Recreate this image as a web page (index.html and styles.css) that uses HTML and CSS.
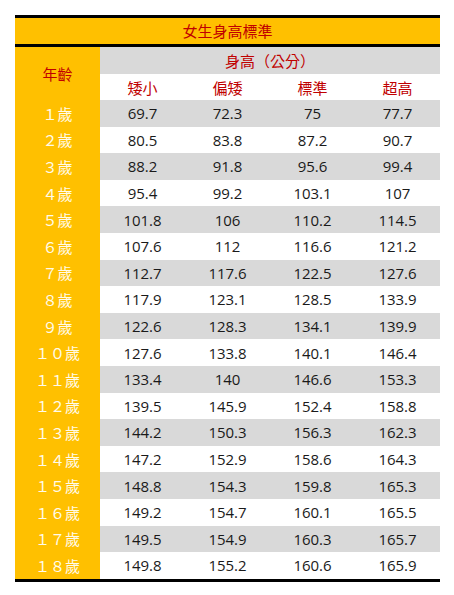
FILE: index.html
```html
<!DOCTYPE html>
<html lang="zh-Hant">
<head>
<meta charset="utf-8">
<title>女生身高標準</title>
<link rel="stylesheet" href="styles.css">
</head>
<body>
<div class="sheet">
  <div class="title">女生身高標準</div>
  <div class="grid">
    <div class="c age-head">年齡</div>
    <div class="c height-head">身高（公分）</div>
    <div class="c sub">矮小</div>
    <div class="c sub">偏矮</div>
    <div class="c sub">標準</div>
    <div class="c sub">超高</div>

    <div class="c lbl">１歲</div><div class="c g">69.7</div><div class="c g">72.3</div><div class="c g">75</div><div class="c g">77.7</div>
    <div class="c lbl">２歲</div><div class="c w">80.5</div><div class="c w">83.8</div><div class="c w">87.2</div><div class="c w">90.7</div>
    <div class="c lbl">３歲</div><div class="c g">88.2</div><div class="c g">91.8</div><div class="c g">95.6</div><div class="c g">99.4</div>
    <div class="c lbl">４歲</div><div class="c w">95.4</div><div class="c w">99.2</div><div class="c w">103.1</div><div class="c w">107</div>
    <div class="c lbl">５歲</div><div class="c g">101.8</div><div class="c g">106</div><div class="c g">110.2</div><div class="c g">114.5</div>
    <div class="c lbl">６歲</div><div class="c w">107.6</div><div class="c w">112</div><div class="c w">116.6</div><div class="c w">121.2</div>
    <div class="c lbl">７歲</div><div class="c g">112.7</div><div class="c g">117.6</div><div class="c g">122.5</div><div class="c g">127.6</div>
    <div class="c lbl">８歲</div><div class="c w">117.9</div><div class="c w">123.1</div><div class="c w">128.5</div><div class="c w">133.9</div>
    <div class="c lbl">９歲</div><div class="c g">122.6</div><div class="c g">128.3</div><div class="c g">134.1</div><div class="c g">139.9</div>
    <div class="c lbl">１０歲</div><div class="c w">127.6</div><div class="c w">133.8</div><div class="c w">140.1</div><div class="c w">146.4</div>
    <div class="c lbl">１１歲</div><div class="c g">133.4</div><div class="c g">140</div><div class="c g">146.6</div><div class="c g">153.3</div>
    <div class="c lbl">１２歲</div><div class="c w">139.5</div><div class="c w">145.9</div><div class="c w">152.4</div><div class="c w">158.8</div>
    <div class="c lbl">１３歲</div><div class="c g">144.2</div><div class="c g">150.3</div><div class="c g">156.3</div><div class="c g">162.3</div>
    <div class="c lbl">１４歲</div><div class="c w">147.2</div><div class="c w">152.9</div><div class="c w">158.6</div><div class="c w">164.3</div>
    <div class="c lbl">１５歲</div><div class="c g">148.8</div><div class="c g">154.3</div><div class="c g">159.8</div><div class="c g">165.3</div>
    <div class="c lbl">１６歲</div><div class="c w">149.2</div><div class="c w">154.7</div><div class="c w">160.1</div><div class="c w">165.5</div>
    <div class="c lbl">１７歲</div><div class="c g">149.5</div><div class="c g">154.9</div><div class="c g">160.3</div><div class="c g">165.7</div>
    <div class="c lbl">１８歲</div><div class="c w">149.8</div><div class="c w">155.2</div><div class="c w">160.6</div><div class="c w">165.9</div>
  </div>
</div>
</body>
</html>
```
FILE: styles.css
```css
html, body {
  margin: 0;
  padding: 0;
  background: #ffffff;
}

body {
  font-family: "Open Sans", "Noto Sans CJK TC", sans-serif;
  font-size: 15px;
  color: #1a1a1a;
}

.sheet {
  margin: 15px 0 0 15px;
  width: 425px;
  border-top: 3px solid #000;
  border-bottom: 3px solid #000;
}

.title {
  height: 26px;
  line-height: 26px;
  background: #ffc000;
  color: #c00000;
  text-align: center;
  border-bottom: 3px solid #000;
  font-family: "Noto Sans CJK TC", sans-serif;
}

.grid {
  display: grid;
  grid-template-columns: 85px repeat(4, 85px);
  grid-template-rows: 27px 26px repeat(18, 26.6px);
}

.c {
  display: flex;
  align-items: center;
  justify-content: center;
  white-space: nowrap;
}

.age-head {
  grid-row: span 2;
  background: #ffc000;
  color: #c00000;
  font-family: "Noto Sans CJK TC", sans-serif;
}

.height-head {
  grid-column: span 4;
  background: #d9d9d9;
  color: #c00000;
  font-family: "Noto Sans CJK TC", sans-serif;
}

.sub {
  background: #ffffff;
  color: #c00000;
  font-family: "Noto Sans CJK TC", sans-serif;
}

.lbl {
  background: #ffc000;
  color: #fffbea;
  font-family: "Noto Sans CJK TC", sans-serif;
}

.g {
  background: #d9d9d9;
}

.w {
  background: #ffffff;
}
```
